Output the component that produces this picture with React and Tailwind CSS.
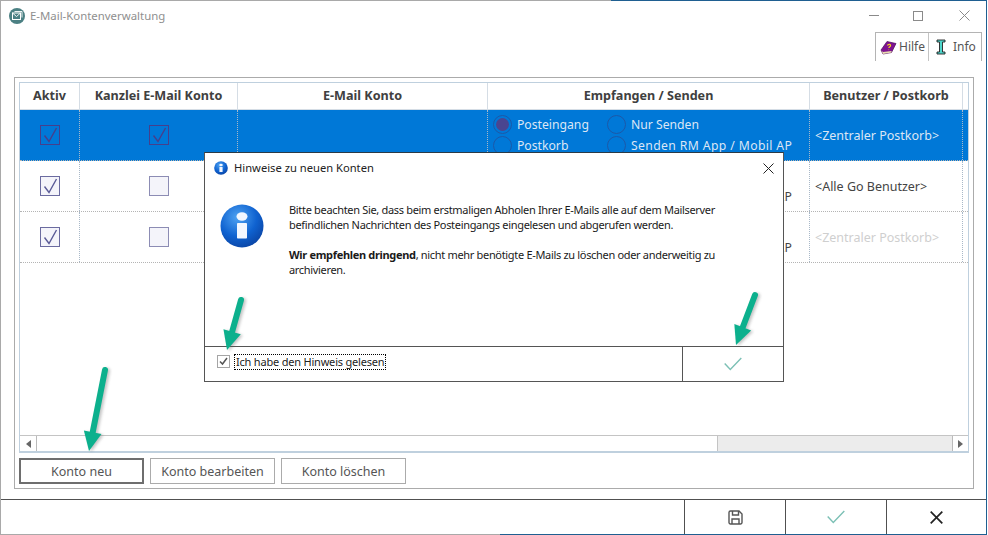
const font = { fontFamily: '"Noto Sans", "Open Sans", sans-serif' };

function Check({ selected, off }) {
  const c = selected ? "#463f8c" : "#5a5a96";
  return (
    <span className={`block w-5 h-5 border ${selected ? "border-[#463f8c]" : off ? "border-[#8c8cb4]" : "border-[#6b6ba0]"} ${selected ? "" : "bg-[#f4f4fa]"}`}>
      {!off && (
        <svg width="18" height="18" viewBox="0 0 18 18" fill="none">
          <path d="M3.5 9.5 L8 15.5 L15.5 2" stroke={c} strokeWidth="1.4" />
        </svg>
      )}
    </span>
  );
}

function Radio({ filled, selected }) {
  return (
    <span className={`flex items-center justify-center w-[19px] h-[19px] shrink-0 rounded-full border ${selected ? "border-[#1c58a8]" : "border-[#8a8a8a]"}`}>
      {filled && <span className="block w-[13px] h-[13px] rounded-full bg-[#4a4590]" />}
    </span>
  );
}

function Row({ selected, user, userClass }) {
  return (
    <div className={`grid grid-cols-[60px_158px_250px_322px_153px_1fr] h-[51px] border-b border-dotted border-[#b4b4b4] ${selected ? "bg-[#0078d7]" : "bg-white"}`}>
      <div className="flex items-center justify-center border-r border-dotted border-[#a8b8c8]"><Check selected={selected} /></div>
      <div className="flex items-center justify-center border-r border-dotted border-[#a8b8c8]"><Check selected={selected} off={!selected} /></div>
      <div className="border-r border-dotted border-[#a8b8c8]" />
      <div className={`flex flex-col justify-center gap-[2px] pl-[5px] border-r border-dotted border-[#a8b8c8] text-[12.2px] ${selected ? "text-[#dce6f5]" : "text-[#444]"}`}>
        <div className="flex items-center h-[19px]">
          <Radio filled selected={selected} />
          <span className="ml-[5px] w-[90px] pt-px">Posteingang</span>
          <Radio selected={selected} />
          <span className="ml-[5px] pt-px">Nur Senden</span>
        </div>
        <div className="flex items-center h-[19px]">
          <Radio selected={selected} />
          <span className="ml-[5px] w-[90px] pt-px">Postkorb</span>
          <Radio selected={selected} />
          <span className="ml-[5px] pt-px whitespace-nowrap tracking-[0.38px]">Senden RM App / Mobil AP</span>
        </div>
      </div>
      <div className={`flex items-center pl-[5px] pt-[2px] border-r border-dotted border-[#a8b8c8] text-[12.5px] whitespace-nowrap ${userClass}`}>{user}</div>
      <div />
    </div>
  );
}

function Arrow({ className, x1, y1, x2, y2 }) {
  const dx = x2 - x1, dy = y2 - y1, len = Math.hypot(dx, dy);
  const ux = dx / len, uy = dy / len;
  const bx = x2 - ux * 19, by = y2 - uy * 19;
  const px = -uy, py = ux;
  return (
    <svg className={className} width="60" height="100" viewBox="0 0 60 100" fill="none">
      <defs>
        <filter id="as" x="-50%" y="-50%" width="200%" height="200%"><feGaussianBlur stdDeviation="1.6" /></filter>
      </defs>
      <g transform="translate(2 1)" filter="url(#as)" opacity="0.35">
        <line x1={x1} y1={y1} x2={bx} y2={by} stroke="#555" strokeWidth="6" strokeLinecap="round" />
        <polygon points={`${x2},${y2} ${bx + px * 9},${by + py * 9} ${bx - px * 9},${by - py * 9}`} fill="#555" />
      </g>
      <line x1={x1} y1={y1} x2={bx} y2={by} stroke="#0cb08d" strokeWidth="6" strokeLinecap="round" />
      <polygon points={`${x2},${y2} ${bx + px * 9},${by + py * 9} ${bx - px * 9},${by - py * 9}`} fill="#0cb08d" />
    </svg>
  );
}

function InfoIcon({ size, id }) {
  return (
    <svg width={size} height={size} viewBox="0 0 44 44">
      <defs>
        <radialGradient id={id} cx="0.4" cy="0.3" r="0.8">
          <stop offset="0" stopColor="#4fa3f2" />
          <stop offset="0.55" stopColor="#0f62d0" />
          <stop offset="1" stopColor="#0a3f9c" />
        </radialGradient>
      </defs>
      <circle cx="22" cy="22" r="21.5" fill={`url(#${id})`} />
      <ellipse cx="22" cy="12.5" rx="5.5" ry="4.2" fill="#f2f7ff" />
      <rect x="17" y="19" width="10" height="15.5" rx="0.8" fill="#f2f7ff" />
    </svg>
  );
}

function Tick({ w = 18, h = 14 }) {
  return (
    <svg width={w} height={h} viewBox="0 0 18 14" fill="none">
      <path d="M0.7 6.5 L6.3 12.5 L17.3 1" stroke="#7cc0b5" strokeWidth="1.4" />
    </svg>
  );
}

export default function App() {
  const headCell = "flex items-center justify-center pt-px border-r border-[#d5dde5]";
  return (
    <div className="relative w-[988px] h-[535px] bg-white flex flex-col overflow-hidden text-[#444] pr-px" style={font}>
      <div className="flex h-px shrink-0">
        <div className="w-[611px] bg-[#a9a9a9]" />
        <div className="flex-1 bg-[#1f5f91]" />
      </div>

      <div className="flex-1 flex flex-col min-h-0 border-l border-[#a9a9a9] border-r border-r-[#1f5f91]">
        {/* title bar */}
        <div className="flex items-center h-[29px] shrink-0 pl-2 pr-[16px]">
          <svg width="16" height="16" viewBox="0 0 16 16" fill="none" className="shrink-0">
            <circle cx="8" cy="8" r="8" fill="#4b8083" />
            <rect x="3.5" y="5" width="8" height="6.5" stroke="#fff" strokeWidth="1" />
            <path d="M3.5 5 L7.5 8.5 L11.5 5 M5.5 3.5 H13 V9.5" stroke="#fff" strokeWidth="0.9" />
          </svg>
          <span className="ml-[5px] text-[11.4px] text-[#8f8f8f]">E-Mail-Kontenverwaltung</span>
          <div className="ml-auto flex items-center">
            <span className="block w-[10px] h-px bg-[#8a8a8a]" />
            <span className="block w-[10px] h-[10px] ml-[34px] border border-[#8a8a8a]" />
            <svg className="ml-[36px]" width="11" height="11" viewBox="0 0 11 11" stroke="#8a8a8a" strokeWidth="1"><path d="M0.5 0.5 L10.5 10.5 M10.5 0.5 L0.5 10.5" /></svg>
          </div>
        </div>

        {/* tabs */}
        <div className="flex justify-end h-[47px] shrink-0 pr-[4px] pt-[2px]">
          <div className="flex h-[29px] border-t border-l border-r border-[#b4b4b4] text-[12px] text-[#555]">
            <div className="flex items-center gap-[2px] w-[53px] pl-[4px] border-r border-[#c4c4c4]">
              <svg width="17" height="15" viewBox="0 0 17 15" className="shrink-0">
                <path d="M1 10 L7 1.5 L16 3.5 L11.5 12.5 L3 14 Z" fill="#7d1390" stroke="#4a0a5a" strokeWidth="0.7" />
                <path d="M1.5 10.5 L3 14 L11.5 12.5 L11.5 11 L3 12 Z" fill="#e8dcb0" />
                <path d="M7.5 5.5 C8 3.8 11 4 10.5 5.8 C10.2 6.8 9 6.8 8.8 8 M8.5 9.6 L8.6 10" stroke="#f3d31e" strokeWidth="1.2" fill="none" />
              </svg>
              <span>Hilfe</span>
            </div>
            <div className="flex items-center gap-[7px] w-[52px] pl-[7px]">
              <svg width="10" height="16" viewBox="0 0 10 16" className="shrink-0">
                <path d="M1 1 H9 V3 H6.5 V13 H9 V15 H1 V13 H3.5 V3 H1 Z" fill="#4fd6cc" stroke="#222" strokeWidth="0.9" />
              </svg>
              <span>Info</span>
            </div>
          </div>
        </div>

        {/* group box */}
        <div className="ml-[13px] mr-[12px] h-[412px] shrink-0 border border-[#ababab] pt-1 px-1 flex flex-col">
          <div className="h-[371px] border border-[#bfd0de] border-b-2 flex flex-col">
            <div className="grid grid-cols-[60px_158px_250px_322px_153px_1fr] h-[27px] shrink-0 border-b border-[#d5dde5] text-[12.6px] font-bold text-[#404040]">
              <div className={headCell}>Aktiv</div>
              <div className={headCell}>Kanzlei E-Mail Konto</div>
              <div className={headCell}>E-Mail Konto</div>
              <div className={headCell}>Empfangen / Senden</div>
              <div className={headCell}>Benutzer / Postkorb</div>
              <div />
            </div>
            <Row selected user="<Zentraler Postkorb>" userClass="text-[#dce6f5]" />
            <Row user="<Alle Go Benutzer>" userClass="text-[#444]" />
            <Row user="<Zentraler Postkorb>" userClass="text-[#cfcfcf]" />
            <div className="mt-auto h-[16px] flex items-stretch bg-[#ececec] border-t border-[#c4c4c4]">
              <div className="w-[17px] bg-white border-r border-[#bbb] flex items-center justify-center">
                <span className="block w-0 h-0 border-y-[4px] border-y-transparent border-r-[5px] border-r-[#666]" />
              </div>
              <div className="w-[681px] bg-white border-r border-[#c4c4c4]" />
              <div className="flex-1" />
              <div className="w-[16px] bg-white border-l border-[#bbb] flex items-center justify-center">
                <span className="block w-0 h-0 border-y-[4px] border-y-transparent border-l-[5px] border-l-[#666]" />
              </div>
            </div>
          </div>
          <div className="flex gap-[6px] mt-[5px] text-[12.5px] text-[#555]">
            <button className="w-[125px] h-[26px] pt-[2px] border-2 border-[#6e6e6e]">Konto neu</button>
            <button className="w-[125px] h-[26px] pt-[2px] border border-[#ababab]">Konto bearbeiten</button>
            <button className="w-[125px] h-[26px] pt-[2px] border border-[#ababab]">Konto löschen</button>
          </div>
        </div>

        {/* footer */}
        <div className="mt-auto h-[35px] shrink-0 border-t border-[#505050] flex justify-end">
          <div className="w-[101px] border-l border-[#505050] flex items-center justify-center">
            <svg width="15" height="15" viewBox="0 0 15 15" fill="none" stroke="#555" strokeWidth="1.4">
              <path d="M2.5 1 H11 L14 4 V12.5 A1.5 1.5 0 0 1 12.5 14 H2.5 A1.5 1.5 0 0 1 1 12.5 V2.5 A1.5 1.5 0 0 1 2.5 1 Z" />
              <path d="M4.5 1 V5 H10.5 V1 M4 14 V9 H11 V14" />
            </svg>
          </div>
          <div className="w-[101px] border-l border-[#505050] flex items-center justify-center"><Tick /></div>
          <div className="w-[100px] border-l border-[#505050] flex items-center justify-center">
            <svg width="13" height="13" viewBox="0 0 13 13" stroke="#222" strokeWidth="1.7"><path d="M0.7 0.7 L12.3 12.3 M12.3 0.7 L0.7 12.3" /></svg>
          </div>
        </div>
      </div>

      <div className="flex h-px shrink-0">
        <div className="w-[500px] bg-[#a9a9a9]" />
        <div className="flex-1 bg-[#1f5f91]" />
      </div>

      {/* dialog */}
      <div className="absolute left-[204px] top-[152px] w-[580px] h-[230px] bg-white border border-[#555] border-t-[#2b3a46] flex flex-col">
        <div className="flex items-center h-[30px] pl-[9px] pr-[9px] shrink-0">
          <InfoIcon size={14} id="ic1" />
          <span className="ml-[6px] text-[11.2px] text-[#222]">Hinweise zu neuen Konten</span>
          <svg className="ml-auto" width="11" height="11" viewBox="0 0 11 11" stroke="#222" strokeWidth="1"><path d="M0.5 0.5 L10.5 10.5 M10.5 0.5 L0.5 10.5" /></svg>
        </div>
        <div className="flex-1 flex pl-[15px] pt-[21px]">
          <div className="shrink-0"><InfoIcon size={44} id="ic2" /></div>
          <div className="ml-[25px] -mt-[2px] text-[11px] leading-[15px] text-[#1a1a1a] tracking-[-0.32px]">
            <p>Bitte beachten Sie, dass beim erstmaligen Abholen Ihrer E-Mails alle auf dem Mailserver</p>
            <p>befindlichen Nachrichten des Posteingangs eingelesen und abgerufen werden.</p>
            <p className="mt-[15px]"><b>Wir empfehlen dringend</b>, nicht mehr benötigte E-Mails zu löschen oder anderweitig zu</p>
            <p>archivieren.</p>
          </div>
        </div>
        <div className="h-[35px] shrink-0 border-t border-[#555] flex">
          <div className="w-[478px] border-r border-[#555] flex items-center pl-[12px] pb-[5px]">
            <span className="w-[13px] h-[13px] border border-[#a5a5a5] flex items-center justify-center">
              <svg width="9" height="9" viewBox="0 0 9 9" fill="none" stroke="#555" strokeWidth="1.5"><path d="M1 4.5 L3.5 7 L8 1" /></svg>
            </span>
            <span className="ml-[4px] text-[11px] leading-[14px] text-[#222] tracking-[-0.2px] border border-dotted border-black px-px whitespace-nowrap">Ich habe den Hinweis gelesen</span>
          </div>
          <div className="flex-1 flex items-center justify-center"><Tick /></div>
        </div>
      </div>

      {/* arrows */}
      <Arrow className="absolute left-[70px] top-[360px]" x1={35} y1={10} x2={19} y2={91} />
      <Arrow className="absolute left-[210px] top-[290px]" x1={31} y1={10} x2={17} y2={60} />
      <Arrow className="absolute left-[720px] top-[285px]" x1={35} y1={10} x2={16} y2={60} />
    </div>
  );
}
